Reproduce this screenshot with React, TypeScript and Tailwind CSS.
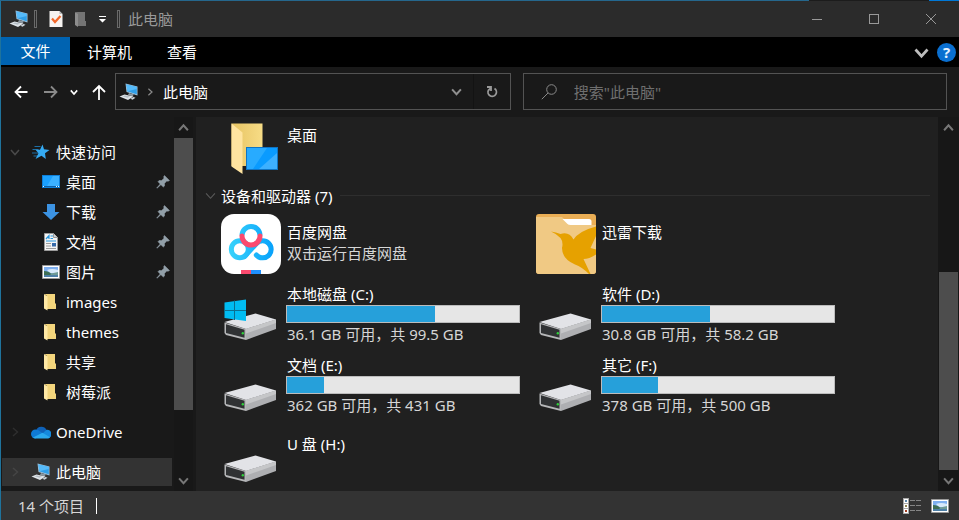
import type { ReactNode } from "react";

function PcIcon() {
  return (
    <svg width="20" height="18" viewBox="0 0 20 18" aria-hidden="true">
      <path d="M6.500 0.500 18.500 3.500V12.500L7.500 9Z" fill="#9fc3dc" />
      <path d="M7.500 1.500 17.800 4V11.300L8.300 8.300Z" fill="#2f9fe8" />
      <path d="M7.500 1.500 17.800 4V6L8.300 8.300Z" fill="#56bbfa" />
      <path d="M10 10 15 11.500 13.500 13.200 9 12Z" fill="#8d9aa5" />
      <path d="M0.500 13.500 5.500 11.500 14.500 13.500 9 17Z" fill="#dfe4e8" />
      <path d="M3.500 13.300 6 12.400 11 13.600 8.500 14.800Z" fill="#b3bcc4" />
      <path d="M11.500 15.800 14.500 14 16.500 14.700 13.500 16.800Z" fill="#cdd4da" />
    </svg>
  );
}

function Chevron({ dir, size = 10, width = 1.5 }: { dir: "up" | "down" | "right"; size?: number; width?: number }) {
  const d = { up: "M1 7.500 5 3l4 4.500", down: "M1 3l4 4.500L9 3", right: "M3 1l4.500 4L3 9" }[dir];
  return (
    <svg width={size} height={size} viewBox="0 0 10 10" fill="none" stroke="currentColor" strokeWidth={width} aria-hidden="true">
      <path d={d} />
    </svg>
  );
}

function BackArrow({ flip = false }: { flip?: boolean }) {
  return (
    <svg width="14" height="14" viewBox="0 0 14 14" fill="none" stroke="currentColor" strokeWidth="1.800" aria-hidden="true">
      <path d={flip ? "M0 7H12M7 1.500 12.500 7 7 12.500" : "M2 7H13.500M7 1.500 1.500 7 7 12.500"} />
    </svg>
  );
}

function UpArrow() {
  return (
    <svg width="14" height="16" viewBox="0 0 14 16" fill="none" stroke="currentColor" strokeWidth="1.800" aria-hidden="true">
      <path d="M7 2V16M1 8 7 2l6 6" />
    </svg>
  );
}

function Handle() {
  return <span className="h-[18px] w-[3px] border border-[#6a6a6a]" />;
}

function FolderIcon() {
  return (
    <svg width="18" height="18" viewBox="0 0 18 18" aria-hidden="true">
      <path d="M2.500 1H13V10.500H14V16H5V3Z" fill="#f3d57c" />
      <path d="M2 1 5.500 3.500V17.500L2 15.500Z" fill="#ffe9a6" />
    </svg>
  );
}

function StarIcon() {
  return (
    <svg width="20" height="18" viewBox="0 0 20 18" aria-hidden="true">
      <path d="M3.500 3.500h6M1.500 6.500h6M1 10h7M2.500 13h5" stroke="#1d6fa5" strokeWidth="1" />
      <path d="M11.500 1.500 13 6.300 18.500 7 14 10.200 14.800 16 10.500 12.800 4.500 16 7.500 10.300 4.500 6.700 9 6.700Z" fill="#35aaf2" />
    </svg>
  );
}

function DesktopIcon() {
  return (
    <svg width="18" height="14" viewBox="0 0 18 14" aria-hidden="true">
      <path d="M0 0h18v13H0z" fill="#0e7fd8" />
      <path d="M1 1h16v10H1z" fill="#1aa0ff" />
      <path d="M11 1h6v10H5Z" fill="#3bb0ff" />
      <path d="M1 11.500h16" stroke="#0b5fa8" />
      <path d="M1 11.500h1M14 11.500h1M16 11.500h1" stroke="#e6f4ff" />
    </svg>
  );
}

function DownloadIcon() {
  return (
    <svg width="18" height="18" viewBox="0 0 18 18" aria-hidden="true">
      <path d="M5 1h8v8h4.500L9 17 .5 9H5Z" fill="#3c93e3" />
    </svg>
  );
}

function DocumentIcon() {
  return (
    <svg width="18" height="18" viewBox="0 0 18 18" aria-hidden="true">
      <path d="M2.500.500h9l4 4v13h-13z" fill="#f4f4f4" stroke="#9b9b9b" />
      <path d="M11.500.500v4h4" fill="#cfcfcf" stroke="#9b9b9b" />
      <path d="M4 6 7 2.500V6M8.500 3H11M8.500 5.500H11M4 8h10" fill="none" stroke="#2795dc" strokeWidth="1.200" />
      <path d="M4 10.500h5M4 13h5M4 15.500h10" stroke="#9b9b9b" />
      <path d="M10 10h4v3.500h-4z" fill="#3569a8" />
    </svg>
  );
}

function PictureIcon() {
  return (
    <svg width="18" height="14" viewBox="0 0 18 14" aria-hidden="true">
      <path d="M.5.500h17v13H.5z" fill="#fff" stroke="#9a9a9a" />
      <path d="M2 2h14v10H2z" fill="#7fb0f0" />
      <path d="M5 5q5-2 11 0v3H8Z" fill="#d7e9fa" />
      <path d="M2 6q5 0 9 4H2z" fill="#3f6f55" />
      <path d="M8 8.800 16 7v3H9Z" fill="#6f9a95" />
      <path d="M2 10h14v2H2z" fill="#4d7fa6" />
    </svg>
  );
}

function CloudIcon() {
  return (
    <svg width="20" height="14" viewBox="0 0 20 14" aria-hidden="true">
      <path d="M5 5.500A5.700 5.700 0 0 1 15.500 5l-3 5L4 7Z" fill="#0f62b8" />
      <path d="M4.500 4.500a4.500 4.500 0 0 0 0 9L12 8.500 7.500 5.300Z" fill="#0f7ad4" />
      <path d="M15.500 4.800a4.300 4.300 0 0 1 1.500 8.500L11.500 8.500Z" fill="#1589dd" />
      <path d="M2 12.500 11.500 7.800 19 12.300q-1 1.200-2.500 1.200h-12Q3 13.500 2 12.500Z" fill="#2aa9ee" />
    </svg>
  );
}

function PinIcon() {
  return (
    <svg width="14" height="14" viewBox="0 0 14 14" aria-hidden="true">
      <path d="M8.500.500 13.500 5.500 12 6.300 10.700 6 8.500 8.500 8.500 11 7.300 12 4.900 9.700 1 13.300.7 13 4.200 9 2 6.700 3 5.600 5.600 5.500 8 3.200 7.700 1.700Z" fill="#929fa8" stroke="#929fa8" strokeWidth=".5" />
    </svg>
  );
}

function DriveIcon({ windows = false }: { windows?: boolean }) {
  return (
    <svg width="60" height="60" viewBox="0 0 60 60" aria-hidden="true">
      <path d="M3.500 38.500 25 45V56L5 51 3.500 49Z" fill="#b6b7b9" />
      <path d="M25 45 55 35.500V45L25 56Z" fill="#aeafb2" />
      <path d="M25 45 55 35.500V39L25 49.500Z" fill="#c5c6c8" />
      <path d="M3.500 38 34.500 29.500 55 35.500 25 45Z" fill="#e2e3e7" />
      <path d="M5 40.200 23.500 45.700V53.800L5 49Z" fill="#303234" />
      <circle cx="21.800" cy="49.300" r="1.200" fill="#2fd13a" />
      {windows && (
        <>
          <path d="M3.500 18.500 25 15.500V37L3.500 34Z" fill="#00bcf2" />
          <path d="M13.500 16.500V36M3.500 26.500H25" stroke="#0b6f90" />
        </>
      )}
    </svg>
  );
}

function BigFolderIcon() {
  return (
    <svg width="60" height="60" viewBox="0 0 60 60" aria-hidden="true">
      <defs>
        <linearGradient id="folderBack" x1="0" x2="1">
          <stop offset="0" stopColor="#e7c463" />
          <stop offset="1" stopColor="#f7dc86" />
        </linearGradient>
      </defs>
      <path d="M10.500.500H41.500V43H10.500Z" fill="url(#folderBack)" />
      <path d="M10.500.500 21.500 9.500V51L10.500 43.500Z" fill="#ffe4a0" />
      <path d="M25 24H57V47H25Z" fill="#0f74c4" />
      <path d="M26 25H56V46H26Z" fill="#0a9bff" />
      <path d="M26 25H46L32 46H26Z" fill="#28abff" />
      <path d="M56 30V46H38Z" fill="#3db0ff" />
    </svg>
  );
}

function BaiduIcon() {
  return (
    <svg width="60" height="60" viewBox="0 0 60 60" aria-hidden="true">
      <defs>
        <linearGradient id="netdisk" gradientUnits="userSpaceOnUse" x1="8" x2="52" y1="30" y2="30">
          <stop offset="0" stopColor="#38d3fb" />
          <stop offset="1" stopColor="#08a2fb" />
        </linearGradient>
      </defs>
      <rect width="60" height="60" rx="13" fill="#fff" />
      <g fill="none" strokeWidth="5">
        <circle cx="18.800" cy="35.200" r="8.500" stroke="url(#netdisk)" />
        <path d="M23.500 42.500 35.500 29.500A8.500 8.500 0 1 1 35.300 41" stroke="url(#netdisk)" strokeLinecap="round" />
        <path d="M21 21.500A9 9 0 0 1 39 21.500" stroke="url(#netdisk)" />
        <path d="M21 22A9 9 0 1 0 39 22" stroke="#fb4a6e" strokeLinecap="round" />
      </g>
      <path d="M20 56h10v4H20z" fill="#fb4a6e" />
      <path d="M30 56h10v4H30z" fill="#1e90ff" />
    </svg>
  );
}

function ThunderIcon() {
  return (
    <svg width="60" height="60" viewBox="0 0 60 60" aria-hidden="true">
      <rect width="60" height="60" rx="3" fill="#eaae55" />
      <path d="M0 3H26L34 11H60V57a3 3 0 0 1-3 3H3a3 3 0 0 1-3-3Z" fill="#f0c984" />
      <path d="M26.500 5H53q2.500 0 2.500 2.500V11H34.500q-2 0-3.500-1.500Z" fill="#fff" />
      <path d="M15 17.500Q20 18 24.500 20Q33 17 37.500 25.500Q43 17 60 12.500V22L54.500 34 60 35.500V40.500Q53 45 47.500 45L54.500 60H53Q46 53 39 50.500 26 45 26 34 27.500 28 24.500 24 20 19.500 15 17.500Z" fill="#e6a100" />
    </svg>
  );
}

const quick: { name: string; icon: ReactNode; pinned?: boolean }[] = [
  { name: "桌面", icon: <DesktopIcon />, pinned: true },
  { name: "下载", icon: <DownloadIcon />, pinned: true },
  { name: "文档", icon: <DocumentIcon />, pinned: true },
  { name: "图片", icon: <PictureIcon />, pinned: true },
  { name: "images", icon: <FolderIcon /> },
  { name: "themes", icon: <FolderIcon /> },
  { name: "共享", icon: <FolderIcon /> },
  { name: "树莓派", icon: <FolderIcon /> },
];

const drives = [
  { name: "本地磁盘 (C:)", info: "36.1 GB 可用，共 99.5 GB", used: 63.7, windows: true },
  { name: "软件 (D:)", info: "30.8 GB 可用，共 58.2 GB", used: 46.5 },
  { name: "文档 (E:)", info: "362 GB 可用，共 431 GB", used: 16 },
  { name: "其它 (F:)", info: "378 GB 可用，共 500 GB", used: 24.2 },
];

function TreeRoot({ name, icon, open = false, selected = false }: { name: string; icon: ReactNode; open?: boolean; selected?: boolean }) {
  return (
    <button
      className={`flex w-[170px] shrink-0 items-center pl-2 text-left ${selected ? "h-7 bg-[#333333]" : "h-[30px]"}`}
    >
      <span className={`w-[21px] ${open ? "text-[#4a4a4a]" : selected ? "text-[#454545]" : "text-[#2e2e2e]"}`}>
        <Chevron dir={open ? "down" : "right"} />
      </span>
      <span className="w-[25px]">{icon}</span>
      {name}
    </button>
  );
}

function ScrollBar({ className, thumb }: { className: string; thumb: string }) {
  return (
    <div className={`flex shrink-0 flex-col items-center bg-[#171717] text-[#777777] ${className}`}>
      <span className="flex h-[21px] items-center">
        <Chevron dir="up" size={11} width={1.8} />
      </span>
      <div className="flex w-[19px] flex-1 flex-col">
        <div className={`bg-[#4d4d4d] ${thumb}`} />
      </div>
      <span className="flex h-[21px] items-center">
        <Chevron dir="down" size={11} width={1.8} />
      </span>
    </div>
  );
}

function TitleBar() {
  return (
    <header className="flex h-9 shrink-0 items-center bg-[#2b2b2b] text-[#999999]">
      <div className="flex items-center pl-2">
        <PcIcon />
        <span className="flex w-5 pl-[5px]">
          <Handle />
        </span>
        <button aria-label="属性">
          <svg width="14" height="18" viewBox="0 0 14 18" aria-hidden="true">
            <path d="M.5 1h10l3 3v13H.5z" fill="#f6f3f1" />
            <path d="M10.500 1v3h3z" fill="#b5b5b5" />
            <path d="m3 8.500 3 3.500 5.500-6" fill="none" stroke="#f2672a" strokeWidth="2.200" />
          </svg>
        </button>
        <button className="pl-3" aria-label="新建文件夹">
          <svg width="12" height="18" viewBox="0 0 12 18" aria-hidden="true">
            <path d="M1 2h9v9h1v5H3z" fill="#747474" />
            <path d="M0 2 3 4v13L0 15z" fill="#8d8d8d" />
          </svg>
        </button>
        <button className="pl-3 text-white" aria-label="自定义快速访问工具栏">
          <svg width="8" height="8" viewBox="0 0 8 8" fill="currentColor" aria-hidden="true">
            <path d="M0 1h7v1H0zM0 4h7L3.500 7.500z" />
          </svg>
        </button>
        <span className="flex w-5 pl-[10px]">
          <Handle />
        </span>
        <h1 className="pb-px pl-px">此电脑</h1>
      </div>
      <div className="ml-auto flex h-full">
        <button className="flex w-[57px] items-center justify-center" aria-label="最小化">
          <span className="h-px w-[10px] bg-current" />
        </button>
        <button className="flex w-[57px] items-center justify-center" aria-label="最大化">
          <span className="size-[10px] border border-current" />
        </button>
        <button className="flex w-[57px] items-center justify-center" aria-label="关闭">
          <svg width="10" height="10" viewBox="0 0 10 10" stroke="currentColor" aria-hidden="true">
            <path d="m0 0 10 10M10 0 0 10" />
          </svg>
        </button>
      </div>
    </header>
  );
}

function Ribbon() {
  return (
    <nav className="flex h-[30px] shrink-0 bg-black text-white">
      <button className="h-7 w-[69px] bg-[#0063b1]">文件</button>
      <button className="w-[79px]">计算机</button>
      <button className="w-[66px]">查看</button>
      <div className="ml-auto flex items-center gap-2 pr-[3px]">
        <button className="text-[#bdbdbd]" aria-label="展开功能区">
          <Chevron dir="down" size={15} width={1.8} />
        </button>
        <button
          className="flex size-[19px] items-center justify-center rounded-full bg-[#0a6fd0] text-[15px] font-bold leading-[19px] text-[#e6f2ff]"
          aria-label="帮助"
        >
          ?
        </button>
      </div>
    </nav>
  );
}

function AddressBar() {
  return (
    <div className="flex h-[50px] shrink-0 items-center bg-[#191919] pb-px pr-3 text-white">
      <div className="flex w-[114px] shrink-0 items-center pl-[13px]">
        <button className="w-[30px]" aria-label="后退"><BackArrow /></button>
        <button className="w-[26px] text-[#8a8a8a]" aria-label="前进"><BackArrow flip /></button>
        <button className="w-[22px]" aria-label="最近浏览的位置"><Chevron dir="down" size={8} width={2} /></button>
        <button aria-label="上移"><UpArrow /></button>
      </div>
      <div className="grid min-w-0 flex-1 grid-cols-[14fr_15fr] gap-3">
        <div className="flex h-[37px] items-center border border-[#535353]">
          <span className="w-[30px] pl-[3px]"><PcIcon /></span>
          <span className="w-[17px] text-[#8a8a8a]"><Chevron dir="right" size={8} /></span>
          <button>此电脑</button>
          <button className="ml-auto flex h-full w-[34px] items-center justify-center border-r border-[#131313] text-[#8f8f8f]" aria-label="历史记录">
            <Chevron dir="down" size={11} width={1.8} />
          </button>
          <button className="flex h-full w-9 items-center justify-center text-[#9a9a9a]" aria-label="刷新">
            <svg width="12" height="12" viewBox="0 0 12 12" fill="none" stroke="currentColor" strokeWidth="1.800" aria-hidden="true">
              <path d="M1 1H5V5" />
              <path d="M8.500 2.600A4.200 4.200 0 1 1 2.600 4L5 2" />
            </svg>
          </button>
        </div>
        <label className="flex h-[37px] items-center border border-[#535353] pl-[17px]">
          <span className="w-[33px] shrink-0 text-[#8a8a8a]">
            <svg width="16" height="16" viewBox="0 0 16 16" fill="none" stroke="currentColor" aria-hidden="true">
              <circle cx="10.500" cy="5.500" r="4.800" />
              <path d="M7 9 .8 15.200" />
            </svg>
          </span>
          <input
            type="search"
            aria-label="搜索"
            placeholder={'搜索"此电脑"'}
            className="h-5 w-full min-w-0 bg-transparent leading-5 outline-none placeholder:text-[#6f6f6f]"
          />
        </label>
      </div>
    </div>
  );
}

function Sidebar() {
  return (
    <aside className="flex w-[195px] shrink-0 overflow-hidden bg-[#191919]">
      <div className="flex w-[173px] shrink-0 flex-col pl-px pt-5">
        <TreeRoot name="快速访问" icon={<StarIcon />} open />
        {quick.map((item) => (
          <button key={item.name} className="flex h-[30px] shrink-0 items-center pl-10 pr-1 text-left">
            <span className="w-6">{item.icon}</span>
            {item.name}
            {item.pinned && (
              <span className="ml-auto">
                <PinIcon />
              </span>
            )}
          </button>
        ))}
        <div className="flex flex-col gap-[11px] pt-[10px]">
          <TreeRoot name="OneDrive" icon={<CloudIcon />} />
          <TreeRoot name="此电脑" icon={<PcIcon />} selected />
        </div>
      </div>
      <ScrollBar className="w-[19px]" thumb="h-[82%]" />
    </aside>
  );
}

function Content() {
  return (
    <main className="flex min-w-0 flex-1 bg-[#202020]">
      <div className="min-w-0 flex-1 overflow-hidden pt-[6px] pl-[9px]">
        <div className="flex h-[60px] gap-[6px] pl-4">
          <BigFolderIcon />
          <p className="pt-[2px] leading-[21px]">桌面</p>
        </div>
        <div className="flex h-[25px] items-center pr-2 text-[#5a5a5a]">
          <span className="w-4"><Chevron dir="down" size={11} width={1} /></span>
          <h2 className="mr-2 text-white">设备和驱动器 (7)</h2>
          <span className="h-px flex-1 bg-[#2e2e2e]" />
        </div>
        <div className="grid grid-cols-[repeat(auto-fill,315px)] pt-[6px] pl-4">
          <div className="flex h-[70px] gap-[6px]">
            <BaiduIcon />
            <div className="pt-2 leading-[21px]">
              <p>百度网盘</p>
              <p className="text-[#d6d6d6]">双击运行百度网盘</p>
            </div>
          </div>
          <div className="flex h-[70px] gap-[6px]">
            <ThunderIcon />
            <p className="pt-2 leading-[21px]">迅雷下载</p>
          </div>
          {drives.map((d) => (
            <div key={d.name} className="flex h-[71px] gap-[5px]">
              <DriveIcon windows={d.windows} />
              <div className="w-[234px]">
                <p className="pb-px pl-px">{d.name}</p>
                <div
                  role="meter"
                  aria-label={d.name}
                  aria-valuenow={d.used}
                  className="h-[18px] border border-[#bcbcbc] bg-[#e6e6e6]"
                >
                  <div className="h-full bg-[#26a0da]" style={{ width: `${d.used}%` }} />
                </div>
                <p className="pl-px pt-px text-[#d6d6d6]">{d.info}</p>
              </div>
            </div>
          ))}
          <div className="flex h-[60px] gap-[6px]">
            <DriveIcon />
            <p className="pt-2">U 盘 (H:)</p>
          </div>
        </div>
      </div>
      <ScrollBar className="w-[21px]" thumb="mt-auto h-[198px]" />
    </main>
  );
}

function StatusBar() {
  return (
    <footer className="flex h-[29px] shrink-0 items-center bg-[#333333] pr-[10px] pl-[17px] text-[#d6d6d6]">
      <span className="border-r border-white pr-3 leading-4">14 个项目</span>
      <div className="ml-auto flex items-center gap-[10px]">
        <button aria-label="详细信息">
          <svg width="18" height="16" viewBox="0 0 18 16" aria-hidden="true">
            <path d="M0 0h6v16H0z" fill="#a8a8a8" />
            <path d="M1 1h4v4H1zM1 6h4v4H1zM1 11h4v4H1z" fill="#fff" />
            <path d="M2 2h2v2H2z" fill="#5b86a8" />
            <path d="M2 7h2v2H2z" fill="#8c8350" />
            <path d="M2 12h2v2H2z" fill="#a33c20" />
            <path d="M7 2.500h5M13 2.500h5M7 7.500h5M13 7.500h5M7 12.500h5M13 12.500h5" stroke="#858585" />
          </svg>
        </button>
        <button aria-label="大缩略图"><PictureIcon /></button>
      </div>
    </footer>
  );
}

export default function App() {
  return (
    <div className="flex h-screen flex-col overflow-hidden bg-[#191919] font-['Noto_Sans','Noto_Sans_CJK_SC',sans-serif] text-[15px] leading-5 text-white">
      <div className="flex h-px shrink-0">
        <span className="flex-1 bg-[#25678d]" />
        <span className="w-[120px] bg-[#1c1c1c]" />
        <span className="w-[30px] bg-[#0078d7]" />
      </div>
      <div className="flex min-h-0 flex-1 flex-col border-l border-[#1f739c]">
        <TitleBar />
        <Ribbon />
        <AddressBar />
        <div className="flex min-h-0 flex-1">
          <Sidebar />
          <Content />
        </div>
        <StatusBar />
      </div>
    </div>
  );
}
